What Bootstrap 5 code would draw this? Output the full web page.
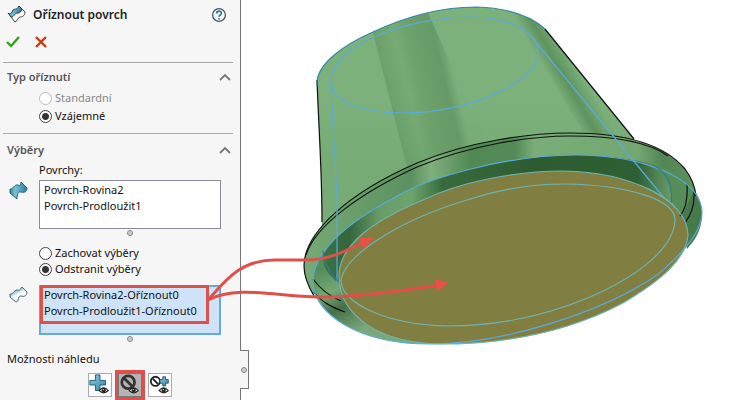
<!DOCTYPE html>
<html lang="cs">
<head>
<meta charset="utf-8">
<meta name="viewport" content="width=device-width, initial-scale=1">
<title>Oříznout povrch</title>
<link href="https://cdn.jsdelivr.net/npm/bootstrap@5.3.0/dist/css/bootstrap.min.css" rel="stylesheet">
<style>
  body { font-family: "Noto Sans", "Open Sans", sans-serif; font-size: 11px; line-height: 16px; color: #111; background: #fff; }
  .pm-panel { width: 241px; background: #f6f6f6; border-right: 1px solid #777; padding: 6px 7px 1px 3px; }
  .pm-title { font-size: 12px; line-height: 18px; font-weight: 600; color: #222; padding-left: 6px; }
  .pm-head { padding: 0 6px 0 4px; }
  .pm-actions { padding: 9px 2px 7px 3px; gap: 15px; }
  .pm-section { border-top: 1px solid #aaa; padding-left: 4px; }
  .pm-group { font-size: 11px; line-height: 16px; font-weight: 600; color: #555; }
  .pm-toggle { padding: 6px 2px 4px 0; }
  .pm-indent { padding-left: 32px; }
  .pm-radio { display: flex; align-items: center; gap: 3px; min-height: 0; margin: 0; padding: 0 0 0 32px; line-height: 18px; }
  .pm-radio .form-check-input { float: none; width: 13px; height: 13px; margin: 0; border: 1px solid #444; background: #fff; }
  .pm-radio .form-check-input:checked { background: radial-gradient(circle, #333 0 3px, #fff 4px); }
  .pm-radio .form-check-input:disabled { border-color: #bbb; opacity: 1; }
  .pm-radio .form-check-input:disabled ~ .form-check-label { color: #888; opacity: 1; }
  .pm-tight { line-height: 16px; }
  .pm-icon { width: 32px; padding: 1px 0 0 2px; }
  .pm-rows { padding-top: 2px; }
  .pm-list { height: 49px; margin: 0 12px 0 0; border: 1px solid #8a8a9a; background: #fff; padding: 1px 4px; }
  .pm-active { height: 50px; border: 2px solid #64aadc; background: #cfe3f8; padding: 0 3px; }
  .pm-mark { top: -2px; left: -1px; right: 10px; height: 39px; border: 3px solid #e0504b; }
  .pm-dot { width: 6px; height: 6px; border: 1px solid #888; border-radius: 50%; background: #ccc; }
  .pm-grip { margin: 1px 12px 1px 32px; height: 6px; }
  .pm-tools { padding: 3px 0 0 78px; }
  .pm-tool { width: 30px; height: 30px; border: 3px solid transparent; background: transparent; }
  .pm-tool svg { display: block; background: #fff; border: 1px solid #aaa; width: 24px; height: 24px; }
  .pm-tool.active { border-color: #e0504b; }
  .pm-tool.active svg { background: #b4b4b4; border-color: #777; }
  .pm-tab { left: 240px; top: 350px; width: 9px; height: 39px; border: 1px solid #777; border-left: 0; background: #f6f6f6; }
  .pm-view { min-width: 0; pointer-events: none; }
</style>
</head>
<body>
<svg width="0" height="0" class="position-absolute" aria-hidden="true">
  <defs>
    <linearGradient id="steel" x1="0" y1="0" x2="1" y2="1"><stop offset="0" stop-color="#93cde0"/><stop offset="1" stop-color="#2f86a6"/></linearGradient>
    <linearGradient id="sheet" x1="0" y1="0" x2="1" y2="0"><stop offset="0" stop-color="#2f87a8"/><stop offset=".3" stop-color="#7cc0d8"/><stop offset=".55" stop-color="#5aa9c6"/><stop offset="1" stop-color="#2c7d9e"/></linearGradient>
    <linearGradient id="pale" x1="0" y1="0" x2=".6" y2="1"><stop offset="0" stop-color="#3d92b4"/><stop offset=".35" stop-color="#8fc4d8"/><stop offset=".6" stop-color="#fff"/><stop offset="1" stop-color="#f4f6f7"/></linearGradient>
    <g id="eye"><path d="M0 5Q5-1 10 5Q5 10 0 5Z" fill="#fff" stroke="#222" stroke-width="1.200"/><circle cx="5" cy="4.500" r="2.400" fill="#222"/><circle cx="4.500" cy="4" r=".7" fill="#fff"/></g>
  </defs>
</svg>
<main class="d-flex min-vh-100 position-relative">
  <aside class="pm-panel flex-shrink-0">
    <header class="pm-head d-flex align-items-center">
      <svg width="20" height="18" viewBox="0 0 20 18" aria-hidden="true"><path d="M1 7C3 9 5 7 6 4C8 2 9 5 12 0L15 3C14 6 12 6 10 7S6 12 4 11Z" fill="url(#sheet)" stroke="#26434d"/><path d="M4 11C6 12 8 7 10 7S14 7 15 3L18 6C18 10 15 11 13 11S10 16 8 16Z" fill="#f7f9fa" stroke="#444"/></svg>
      <h1 class="pm-title mb-0 flex-grow-1">Oříznout povrch</h1>
      <button type="button" class="btn p-0 border-0 lh-1" aria-label="Nápověda"><svg class="d-block" width="16" height="16" viewBox="0 0 16 16"><circle cx="8" cy="8" r="6.400" fill="#f4f8fa" stroke="#4a5963" stroke-width="1.300"/><path d="M5.700 6.500C5.700 3.500 10.400 3.500 10.400 6.200C10.400 8 8 8 8 9.800M8 11V12.600" fill="none" stroke="#2779a6" stroke-width="1.700"/></svg></button>
    </header>
    <div class="pm-actions d-flex">
      <button type="button" class="btn p-0 border-0 lh-1" aria-label="OK"><svg class="d-block" width="14" height="18" viewBox="0 0 14 18"><path d="M1 9L5 13L13 4" fill="none" stroke="#38a01e" stroke-width="2.400"/></svg></button>
      <button type="button" class="btn p-0 border-0 lh-1" aria-label="Storno"><svg class="d-block" width="12" height="18" viewBox="0 0 12 18"><path d="M1 4L11 14M11 4L1 14" fill="none" stroke="#cf3510" stroke-width="2.400"/></svg></button>
    </div>

    <section class="pm-section pb-2 mt-1">
      <div class="pm-toggle d-flex justify-content-between align-items-center">
        <h2 class="pm-group mb-0">Typ oříznutí</h2>
        <button type="button" class="btn p-0 border-0 lh-1" aria-label="Sbalit typ oříznutí"><svg class="d-block" width="12" height="8" viewBox="0 0 12 8"><path d="M1 7L6 2L11 7" fill="none" stroke="#777" stroke-width="1.800"/></svg></button>
      </div>
      <div class="form-check pm-radio"><input class="form-check-input" type="radio" name="typ" id="t1" disabled><label class="form-check-label" for="t1">Standardní</label></div>
      <div class="form-check pm-radio"><input class="form-check-input" type="radio" name="typ" id="t2" checked><label class="form-check-label" for="t2">Vzájemné</label></div>
    </section>

    <section class="pm-section">
      <div class="pm-toggle d-flex justify-content-between align-items-center pb-1 pt-2">
        <h2 class="pm-group mb-0">Výběry</h2>
        <button type="button" class="btn p-0 border-0 lh-1" aria-label="Sbalit výběry"><svg class="d-block" width="12" height="8" viewBox="0 0 12 8"><path d="M1 7L6 2L11 7" fill="none" stroke="#777" stroke-width="1.800"/></svg></button>
      </div>
      <div class="pm-indent" id="lp">Povrchy:</div>
      <div class="pm-rows d-flex">
        <div class="pm-icon flex-shrink-0"><svg width="20" height="20" viewBox="0 0 20 20" aria-hidden="true"><path d="M1 8C4 9 5 3 9 4C11 5 12 4 12 1L18 7C18 11 15 12 12 11S8 14 8 18L1 12Z" fill="url(#sheet)" stroke="#286277"/></svg></div>
        <ul class="pm-list list-unstyled flex-grow-1" role="listbox" aria-labelledby="lp"><li role="option">Povrch-Rovina2</li><li role="option">Povrch-Prodloužit1</li></ul>
      </div>
      <div class="pm-grip d-flex justify-content-center"><span class="pm-dot"></span></div>
      <div class="pt-2">
        <div class="form-check pm-radio pm-tight"><input class="form-check-input" type="radio" name="vyber" id="v1"><label class="form-check-label" for="v1">Zachovat výběry</label></div>
        <div class="form-check pm-radio pm-tight"><input class="form-check-input" type="radio" name="vyber" id="v2" checked><label class="form-check-label" for="v2">Odstranit výběry</label></div>
      </div>
      <div class="d-flex pt-2">
        <div class="pm-icon flex-shrink-0"><svg width="20" height="20" viewBox="0 0 20 20" aria-hidden="true"><path d="M1 8C4 9 5 4 8 4C11 5 11 3 13 1L18 6C18 10 15 11 12 10S10 16 7 16L1 11Z" fill="url(#pale)" stroke="#476575"/></svg></div>
        <ul class="pm-list pm-active list-unstyled flex-grow-1 position-relative" role="listbox" aria-label="Odstraněné výběry"><li role="option">Povrch-Rovina2-Oříznout0</li><li role="option">Povrch-Prodloužit1-Oříznout0</li><li class="pm-mark position-absolute" role="presentation"></li></ul>
      </div>
      <div class="pm-grip d-flex justify-content-center"><span class="pm-dot"></span></div>
      <div class="pt-2" id="lm">Možnosti náhledu</div>
      <div class="pm-tools d-flex" role="group" aria-labelledby="lm">
        <button type="button" class="pm-tool p-0" aria-label="Zobrazit zahrnuté"><svg viewBox="0 0 24 24"><path d="M7 1H12V7H18V12H12V18H7V12H1V7H7Z" fill="url(#steel)" stroke="#1c5974"/><use href="#eye" x="11" y="13"/></svg></button>
        <button type="button" class="pm-tool active p-0" aria-label="Zobrazit vyloučené"><svg viewBox="0 0 24 24"><circle cx="10" cy="9" r="7" fill="none" stroke="#333" stroke-width="3"/><path d="M5 4L15 14" stroke="#333" stroke-width="3"/><use href="#eye" x="11" y="13"/></svg></button>
        <button type="button" class="pm-tool p-0" aria-label="Zobrazit obojí"><svg viewBox="0 0 24 24"><circle cx="7" cy="8" r="5" fill="none" stroke="#222" stroke-width="2"/><path d="M4 5L10 11" stroke="#222" stroke-width="2"/><path d="M15 3H18V6H21V10H18V13H15V10H12V6H15Z" fill="url(#steel)" stroke="#1c5974"/><use href="#eye" x="11" y="13"/></svg></button>
      </div>
    </section>
  </aside>
  <div class="pm-tab position-absolute d-flex align-items-center justify-content-center"><span class="pm-dot flex-shrink-0"></span></div>

  <div class="pm-view flex-grow-1 position-relative">
    <svg class="d-block w-100 overflow-visible" viewBox="241 0 497 400" role="img" aria-label="Model nádoby s označenými plochami">
      <defs>
        <linearGradient id="band" gradientUnits="userSpaceOnUse" x1="386" y1="90" x2="454" y2="74"><stop offset="0" stop-color="#6ca06b"/><stop offset=".3" stop-color="#76ab74"/><stop offset=".5" stop-color="#6da26c"/><stop offset=".85" stop-color="#669a66"/><stop offset="1" stop-color="#7bb07a"/></linearGradient>
        <linearGradient id="band2" gradientUnits="userSpaceOnUse" x1="556" y1="90" x2="582" y2="75"><stop offset="0" stop-color="#7db17b"/><stop offset=".45" stop-color="#5e935e"/><stop offset="1" stop-color="#7db17b"/></linearGradient>
        <linearGradient id="rim" gradientUnits="userSpaceOnUse" x1="304" y1="0" x2="702" y2="0"><stop offset="0" stop-color="#76aa76"/><stop offset=".17" stop-color="#659a67"/><stop offset=".27" stop-color="#5b9160"/><stop offset=".32" stop-color="#7fb07d"/><stop offset=".42" stop-color="#508853"/><stop offset=".53" stop-color="#548a58"/><stop offset=".58" stop-color="#7aad78"/><stop offset=".84" stop-color="#72a771"/><stop offset=".9" stop-color="#528655"/><stop offset="1" stop-color="#5e955f"/></linearGradient>
        <linearGradient id="well" gradientUnits="userSpaceOnUse" x1="325" y1="0" x2="672" y2="0"><stop offset="0" stop-color="#3b7145"/><stop offset=".07" stop-color="#35653b"/><stop offset=".16" stop-color="#699d68"/><stop offset=".25" stop-color="#6da36c"/><stop offset=".34" stop-color="#386b3b"/><stop offset=".6" stop-color="#2d5c31"/><stop offset=".9" stop-color="#2d6034"/><stop offset="1" stop-color="#6c9d6a"/></linearGradient>
        <linearGradient id="lip" gradientUnits="userSpaceOnUse" x1="320" y1="270" x2="350" y2="335"><stop offset="0" stop-color="#548d5a"/><stop offset=".35" stop-color="#75a875"/><stop offset=".6" stop-color="#456f48"/><stop offset="1" stop-color="#7ba87a"/></linearGradient>
        <linearGradient id="fade" x1="0" y1="0" x2="0" y2="1"><stop offset=".4" stop-color="#5d955f" stop-opacity="0"/><stop offset=".7" stop-color="#5d955f" stop-opacity=".2"/><stop offset="1" stop-color="#5d955f" stop-opacity=".2"/></linearGradient>
        <clipPath id="bodyclip"><path id="bodyshape" d="M317 80C318 65 343 45 373 32C405 17 440 7 476 7C510 8 532 17 545 29L634 139L640 200L360 230L322 225C322 170 319 135 317 80Z"/></clipPath>
      </defs>
      <use href="#bodyshape" fill="#7db17b"/>
      <g clip-path="url(#bodyclip)">
        <path d="M371 25L409 175L493 155L422 0Z" fill="url(#band)"/>
        <path d="M504 0L600 160L645 160L533 7Z" fill="url(#band2)"/>
        <path d="M317 7H640V232H317Z" fill="url(#fade)"/>
      </g>
      <path d="M314 296C308 286 304 276 304 266C304 232 350 192 417 163C470 141 530 133 570 133C625 133 665 145 685 169C692 178 695 187 696 196L670 250H330Z" fill="url(#rim)"/>
      <path d="M392 199C423 179 505 155 575 155C640 155 702 177 702 213C702 230 687 250 657 275C600 314 500 344 430 344C360 344 313 315 313 281C313 253 345 224 392 199Z" fill="url(#lip)"/>
      <path d="M692 188C699 195 702 205 702 214C702 230 695 240 687 249L678 210Z" fill="#47794b"/>
      <path d="M323 255C342 226 370 211 392 199C423 179 505 155 575 155C605 155 640 160 656 166C665 172 672 184 671 202L650 240L340 284C328 275 323 268 323 255Z" fill="url(#well)"/>
      <path d="M637 161C675 166 695 187 693 192L682 216L671 201C673 184 662 169 637 161Z" fill="#568d59"/>
      <path d="M423 200C460 182 515 171 563 171C630 172 687 199 688 235C686 260 660 281 623 303C570 331 510 344 440 344C380 343 339 316 339 276C339 244 375 220 423 200Z" fill="#807e40"/>

      <g fill="none" stroke="#111" stroke-width="1.200">
        <path d="M317 80C319 135 322 170 322 222M545 29L634 139"/>
        <path d="M314 296C308 286 304 276 304 266C304 232 350 192 417 163C470 141 530 133 570 133C625 133 665 145 685 169C692 178 695 187 696 196"/>
        <path d="M306 255C315 226 360 193 417 167C470 145 530 136 570 136C620 136 650 143 668 156"/>
        <path d="M313 279C321 290 329 296 341 301M314 292C322 303 334 308 345 312M687 184C688 200 685 210 680 216M694 191C695 205 691 215 685 223"/>
      </g>
      <g fill="none" stroke="#5aaade" stroke-width="1.200">
        <path d="M317 86C315 65 343 45 373 32C405 17 440 7 476 7C510 8 532 17 545 29" stroke="#3487a8"/>
        <path d="M331 81C331 45 408 17 472 17C515 18 538 34 538 52C537 85 465 113 403 113C360 112 331 102 331 81V90L335 160L337 198V283M535 41L665 199"/>
        <path d="M392 199C423 179 505 155 575 155C640 155 702 177 702 213C702 230 687 250 657 275C600 314 500 344 430 344C360 344 313 315 313 281C313 253 345 224 392 199Z"/>
        <path d="M323 251C325 266 331 276 341 284M653 165C669 173 673 186 671 205" stroke="#287f9a"/>
        <path d="M423 200C460 182 515 171 563 171C630 172 687 199 688 235C686 260 660 281 623 303C570 331 510 344 440 344C380 343 339 316 339 276C339 244 375 220 423 200Z" stroke="#6fb4b4"/>
        <path d="M467 200C500 189 535 184 565 184C630 185 675 200 675 220C674 245 645 273 590 297C545 316 495 326 448 326C385 325 341 302 341 281C344 255 400 220 467 200Z" stroke="#6fb4b4"/>
      </g>
      <g fill="none" stroke="#e0504b" stroke-width="3">
        <path d="M208 300C226 280 240 260 275 260H305C330 260 345 251 362 243"/>
        <path d="M208 300C240 284 280 298 330 297C370 296 405 290 439 285"/>
      </g>
      <path d="M359 238L374 238L364 249ZM435 279L449 283L437 291Z" fill="#e85048"/>
    </svg>
  </div>
</main>
<script src="https://cdn.jsdelivr.net/npm/bootstrap@5.3.0/dist/js/bootstrap.bundle.min.js"></script>
</body>
</html>
